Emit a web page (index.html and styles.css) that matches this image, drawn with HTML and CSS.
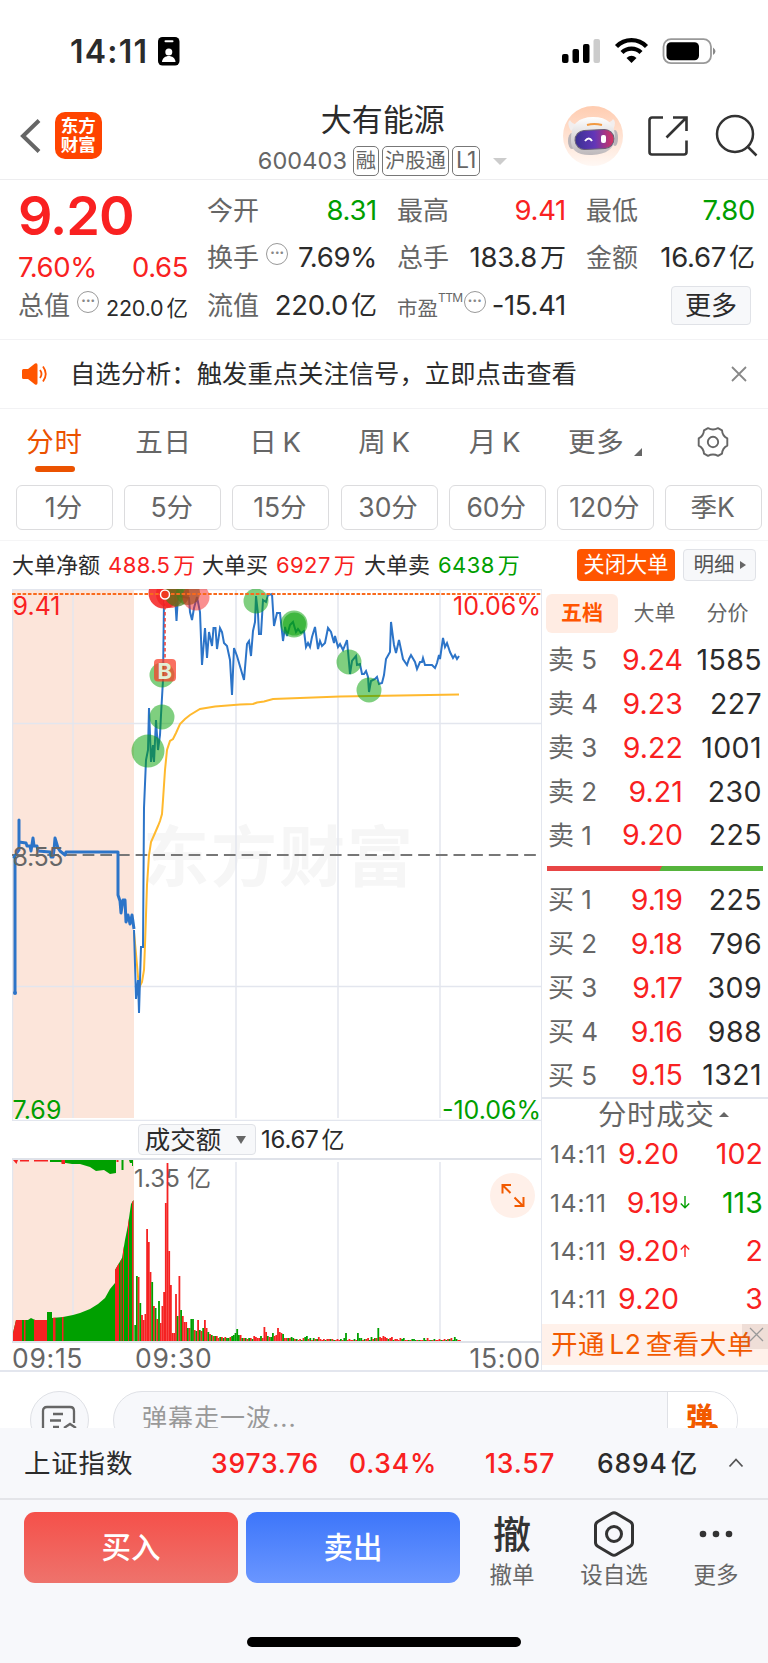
FILE: index.html
```html
<!DOCTYPE html>
<html lang="zh-CN">
<head>
    <meta charset="UTF-8">
    <title>大有能源 600403</title>
    <link rel="stylesheet" href="styles.css">
</head>
<body>
    <div class="statusbar">
        <span class="clock">14:11</span>
        <svg class="badge" width="22" height="29" viewBox="0 0 22 29"><rect width="21.5" height="28.5" rx="4.5"/><rect x="6.5" y="3.2" width="9" height="2" rx="1" fill="#fff"/><circle cx="10.8" cy="15" r="3.5" fill="#fff"/><path d="M4 25c.5-8 13-8 13.500 0z" fill="#fff"/></svg>
        <svg class="signals" width="156" height="28" viewBox="0 0 156 28">
            <rect x="0" y="16" width="6.500" height="9" rx="2"/><rect x="10.500" y="11" width="6.500" height="14" rx="2"/><rect x="21" y="6" width="6.500" height="19" rx="2"/><rect x="31.500" y="1" width="6.500" height="24" rx="2" fill="#ccc"/>
            <g fill="none" stroke="#000" stroke-width="4.300"><path d="M54.500 8.500a21 21 0 0 1 30 0"/><path d="M60 14.500a13.500 13.500 0 0 1 19 0"/></g>
            <path d="M64.500 20q5-4.500 10 0l-5 5z"/>
            <rect x="101.500" y="1.200" width="47.500" height="24" rx="7.500" fill="none" stroke="#999" stroke-width="1.800"/><rect x="104.500" y="4.200" width="32.500" height="18" rx="4.500"/><path d="M151 9.500q5 3.800 0 7.600z" fill="#888"/>
        </svg>
    </div>

    <div class="header">
        <svg class="back" width="22" height="36" viewBox="0 0 22 36"><path d="M19 2.500L3 18l16 15.500" fill="none" stroke="#666" stroke-width="4"/></svg>
        <div class="logo">东方<br>财富</div>
        <div class="stock">
            <div class="name">大有能源</div>
            <div class="code"><span>600403</span><i>融</i><i>沪股通</i><i>L1</i><b></b></div>
        </div>
        <svg class="robot" width="60" height="60" viewBox="0 0 60 60">
            <defs>
                <linearGradient id="halo" x2="0" y2="1"><stop offset="0" stop-color="#ffccb0"/><stop offset="1" stop-color="#fff8f4"/></linearGradient>
                <linearGradient id="visor"><stop offset="0" stop-color="#3a3192"/><stop offset=".5" stop-color="#6236b8"/><stop offset="1" stop-color="#d9345c"/></linearGradient>
                <linearGradient id="shell" x2="0" y2="1"><stop offset="0" stop-color="#fff"/><stop offset="1" stop-color="#bdb8bb"/></linearGradient>
            </defs>
            <circle cx="30" cy="30" r="30" fill="url(#halo)"/>
            <path d="M8 25Q3 17 7 14q2 5 9 4zM50 24q4-8 0-11-2 4-9 4z" fill="#f2eeee"/>
            <ellipse cx="9" cy="35" rx="4" ry="8" fill="#b9b4b8"/><ellipse cx="52" cy="32" rx="3" ry="8" fill="#b9b4b8"/>
            <path d="M8 33Q8 11 30 11t22 21q-1 16-23 17T8 33z" fill="url(#shell)"/>
            <rect x="12" y="24" width="39" height="19" rx="9.500" fill="url(#visor)" stroke="#6a6078" transform="rotate(-3 31 33)"/>
            <path d="M24 19q7-2 15 0" stroke="#f29a42" stroke-width="2" fill="none"/>
            <path d="M22 35q4-5 7 0" fill="none" stroke="#fff" stroke-width="2"/><rect x="38" y="29" width="5" height="8" rx="2" fill="#fff"/>
        </svg>
        <svg class="share" width="42" height="42" viewBox="0 0 42 42" fill="none" stroke="#333" stroke-width="2.600"><path d="M16 2.500H5a2.500 2.500 0 0 0-2.500 2.500v32A2.500 2.500 0 0 0 5 39.500h32a2.500 2.500 0 0 0 2.500-2.500V25.500"/><path d="M26 2.500h13.500V16M38.500 3.500L19.500 22.500"/></svg>
        <svg class="search" width="43" height="43" viewBox="0 0 43 43" fill="none" stroke="#333" stroke-width="2.500"><circle cx="20" cy="20" r="18"/><path d="M32 32l9.500 9.500"/></svg>
    </div>

    <div class="quote">
        <div class="main">
            <div class="last">9.20</div>
            <div class="chg"><span>7.60%</span><span>0.65</span></div>
            <div class="cap"><label>总值</label><em>···</em><span>220.0<u>亿</u></span></div>
        </div>
        <div class="grid">
            <div><label>今开</label><span class="green">8.31</span></div>
            <div><label>最高</label><span class="red">9.41</span></div>
            <div><label>最低</label><span class="green">7.80</span></div>
            <div><label>换手</label><em>···</em><span>7.69%</span></div>
            <div><label>总手</label><span>183.8<u>万</u></span></div>
            <div><label>金额</label><span>16.67<u>亿</u></span></div>
            <div><label>流值</label><span>220.0<u>亿</u></span></div>
            <div><label class="pe">市盈<sup>TTM</sup></label><em>···</em><span>-15.41</span></div>
            <div><button>更多</button></div>
        </div>
    </div>

    <div class="notice">
        <svg width="26" height="22" viewBox="0 0 26 22"><path d="M0 7.500Q0 6 1.500 6H6l7-5.500q2.500-1 2.500 1.500v18q0 2.500-2.500 1.500L6 16H1.500Q0 16 0 14.500z" fill="#ff5500"/><path d="M18 7q3 4 0 8M21 3.500q5.500 7.500 0 15" fill="none" stroke="#ff5500" stroke-width="1.800"/></svg>
        <span>自选分析：触发重点关注信号，立即点击查看</span>
        <svg width="16" height="16" viewBox="0 0 16 16"><path d="M1 1l14 14M15 1L1 15" stroke="#888" stroke-width="1.800"/></svg>
    </div>

    <div class="tabs">
        <span class="on">分时</span><span>五日</span><span>日 K</span><span>周 K</span><span>月 K</span><span class="more">更多</span>
        <span><svg width="32" height="32" viewBox="0 0 32 32" fill="none" stroke="#666" stroke-width="1.900"><path d="M11 2.200q5 2.600 10 0l4 2.200q.4 5.500 5.300 8v7.200q-4.900 2.500-5.300 8l-4 2.200q-5-2.600-10 0l-4-2.200q-.4-5.500-5.300-8v-7.200q4.900-2.500 5.300-8z" stroke-linejoin="round"/><circle cx="16" cy="16" r="5.200"/></svg></span>
    </div>
    <div class="chips">
        <span>1分</span><span>5分</span><span>15分</span><span>30分</span><span>60分</span><span>120分</span><span>季K</span>
    </div>

    <div class="bigorder">
        <span>大单净额</span><b class="red">488.5<u>万</u></b>
        <span>大单买</span><b class="red">6927<u>万</u></b>
        <span>大单卖</span><b class="green">6438<u>万</u></b>
        <button class="close">关闭大单</button><button class="detail">明细<i></i></button>
    </div>

    <div class="board">
        <div class="charts">
            <svg class="price" width="530" height="532" viewBox="12 589 530 532">
                <rect x="12" y="589" width="122" height="529" fill="#fce5da"/>
                <g class="mark"><text x="143" y="881" textLength="270">东方财富</text></g>
                <g stroke="#e3e6ee" stroke-width="1.500">
                    <path d="M12 589.500H541M12 723.500H541M12 986.500H541M12 1120.500H541"/>
                    <path d="M12.500 589V1120M73 589V1118M236 589V1118M338 589V1118M440 589V1118"/>
                </g>
                <path d="M12 855H541" stroke="#777" stroke-width="2" stroke-dasharray="11.700 5.960"/>
                <polyline class="avg" points="134,932 137,965 139,988 142,982 144,970 145,945 147,885 149,855 151,842 155,833 158,826 160,821 162,814 163,800 165,770 167,750 170,741 173,739 176,733 180,724 185,719 190,715 200,709 215,706.500 240,704.500 253,704 257,702.500 264,701.500 273,699 300,698 340,696.500 400,695.500 459,694.500"/>
                <polyline class="line pre" points="15,993 15,858 14,857 19,850 19,820 19,842 26,843 27,846 30,846 31,851 33,838 34,846 37,846 38,851 50,852 51,857 53,857 54,850 55,838 58,848 60,851 65,855 66,852 118,852 118,895 120,901 121,913 123,900 125,900 126,922 128,915 130,924 132,915 134,929"/>
                <polyline class="line" points="134,930 136,999 138,980 139,1013 141,947 143,947 144,808 146,760 148,750 149,708 151,762 153,745 154,762 156,720 158,750 160,735 161,715 163,680 164,600 165,594 175,595 176.500,621 178,596 189,598 190,612 192,620 194,608 197,597 200,612 202,665 205,628 207,658 209,632 212,646 213.500,628 215.500,628 217,649 220,628 222,632 224,643 227,646 230,660 232,695 234,648 237,656 244,680 247,644 249,641 251,656 253,631 255,622 256,596 258,614 259,634 261,634 263,600 266,602 268,595 272,594 274,626 277,613 280,613 283,641 285,627 287,636 290,625 293,622 296,632 298,629 301,633 304,631 306,647 308,643 310,647 312,637 315,627 318,649 320,641 322,646 325,643 328,628 331,632 334,643 335,636 338,647 340,644 343,650 347,640 350,674 352,661 356,656 357,665 360,664 362,674 364,674 366,671 368,677 369,692 371,681 375,679 377,677 379,684 382,683 384,675 386,659 390,652 391,622 394,645 396,653 399,640 403,659 407,665 409,659 411,655 415,662 417,669 420,662 422,662 423,658 425,665 432,665 435,668 437,663 439,655 440,659 443,638 445,647 447,643 450,652 453,658 455,655 457,659 459,656"/>
                <circle cx="15" cy="993" r="2" fill="#2c74c8"/>
                <g fill="#00a000" fill-opacity=".5">
                    <circle cx="148" cy="751" r="16.500"/><circle cx="162" cy="717" r="12.500"/><circle cx="162" cy="675" r="12.500"/><circle cx="256" cy="601" r="12.500"/>
                    <circle cx="294" cy="624" r="13.500"/><circle cx="294.500" cy="624" r="11.500"/><circle cx="349" cy="662" r="12.500"/><circle cx="369" cy="690" r="12.500"/>
                </g>
                <circle cx="164" cy="593" r="15.500" fill="#f52020" fill-opacity=".85"/><circle cx="170" cy="594" r="14" fill="#f52020" fill-opacity=".7"/>
                <circle cx="177" cy="594" r="12.500" fill="#4a7a1a" fill-opacity=".7"/><circle cx="188" cy="593" r="12" fill="#4a7a1a" fill-opacity=".65"/>
                <circle cx="196" cy="597" r="13.500" fill="#f52020" fill-opacity=".5"/>
                <path d="M12 594H541" stroke="#f96a1c" stroke-width="1.800" stroke-dasharray="3.600 1.700"/>
                <path d="M165 600V659" stroke="#f03a30" stroke-width="1.500" stroke-dasharray="3.500 2.500"/>
                <circle cx="165" cy="594.500" r="4.500" fill="#f03a20" stroke="#fff" stroke-width="1.500"/>
                <rect x="154" y="659" width="22" height="22.500" rx="4" fill="#f8402c" fill-opacity=".75"/>
                <text class="b" x="164.800" y="678.500">B</text>
                <g class="axis">
                    <text x="12.500" y="614.500" fill="#f92121" textLength="48">9.41</text><text x="541" y="614.500" fill="#f92121" text-anchor="end" textLength="88">10.06%</text>
                    <text x="12.500" y="866" fill="#666" textLength="51">8.55</text>
                    <text x="12.500" y="1119" fill="#009e00" textLength="49">7.69</text><text x="541" y="1119" fill="#009e00" text-anchor="end" textLength="99">-10.06%</text>
                </g>
            </svg>
            <div class="indicator"><button>成交额<i></i></button><span>16.67<u>亿</u></span></div>
            <svg class="volume" width="530" height="185" viewBox="12 1158 530 185">
                <rect x="12" y="1160" width="122" height="181" fill="#fce5da"/>
                <path d="M73 1162V1340M236 1162V1340M338 1162V1340M440 1162V1340M12.500 1158V1342" stroke="#e3e6ee" stroke-width="1.500"/>
                <text x="134" y="1186.500" class="peak" textLength="77">1.35 亿</text>
                <clipPath id="auction"><path d="M13 1341V1333L16 1320H28L31 1318 35 1320H47V1312H52V1318L63 1317 73 1315 80 1313 90 1309 98 1304 105 1298 110 1289 115 1283V1270L122 1258 125 1240 128 1225 131 1204 133.500 1200V1341z"/></clipPath>
                <g clip-path="url(#auction)">
                    <rect x="12" y="1190" width="122" height="151" fill="#00a000"/>
                    <path d="M13 1190h9v151h-9zM24 1190h1.500v151h-1.500zM34 1190h13v151h-13zM53 1190h2.500v151h-2.500zM62 1190h1.500v151h-1.500zM115 1190h4v151h-4zM120.500 1190h1v151h-1zM123 1190h1v151h-1zM128 1190h1v151h-1zM132 1190h2v151h-2z" fill="#f52222"/>
                </g>
                <path d="M50 1160V1162H60L72 1164 80 1164 90 1167 96 1171 104 1170 110 1174 116 1173V1160zM121.500 1160h2v10h-2zM129 1160h4v6h-1v-3h-2z" fill="#00a000"/>
                <path d="M13 1160h5l-1.500 4zM61.500 1160h3.500v4h-3.500zM20 1160h9v1.500h-9zM34 1160h14v1.500h-14zM116.500 1160h2v2h-2z" fill="#f52222"/>
                <g id="bars"></g>
                <path d="M12 1159H541M12 1342H541" stroke="#dfe2e9" stroke-width="2"/>
                <circle cx="512.500" cy="1195.500" r="22.500" fill="#fff0e9"/>
                <path d="M502.500 1193.500v-8.500h8.500M502.500 1185l8 8M514.500 1197.500l8 8M523.500 1197v9h-9" fill="none" stroke="#f25a00" stroke-width="2"/>
            </svg>
            <div class="times"><span>09:15</span><span>09:30</span><span>15:00</span></div>
        </div>

        <div class="depth">
            <div class="dtabs"><span class="on">五档</span><span>大单</span><span>分价</span></div>
            <div class="row"><label>卖 5</label><b>9.24</b><span>1585</span></div>
            <div class="row"><label>卖 4</label><b>9.23</b><span>227</span></div>
            <div class="row"><label>卖 3</label><b>9.22</b><span>1001</span></div>
            <div class="row"><label>卖 2</label><b>9.21</b><span>230</span></div>
            <div class="row"><label>卖 1</label><b>9.20</b><span>225</span></div>
            <div class="ratio"></div>
            <div class="row"><label>买 1</label><b>9.19</b><span>225</span></div>
            <div class="row"><label>买 2</label><b>9.18</b><span>796</span></div>
            <div class="row"><label>买 3</label><b>9.17</b><span>309</span></div>
            <div class="row"><label>买 4</label><b>9.16</b><span>988</span></div>
            <div class="row"><label>买 5</label><b>9.15</b><span>1321</span></div>
            <div class="ticks">
                <div class="thead">分时成交<i></i></div>
                <div class="tick"><label>14:11</label><b>9.20</b><i></i><span class="red">102</span></div>
                <div class="tick"><label>14:11</label><b>9.19</b><i class="green"><svg width="10" height="13" viewBox="0 0 10 13"><path d="M5 0v11.500M.8 7.500L5 11.700l4.200-4.200"/></svg></i><span class="green">113</span></div>
                <div class="tick"><label>14:11</label><b>9.20</b><i class="red"><svg width="10" height="13" viewBox="0 0 10 13"><path d="M5 13V1.500M.8 5.500L5 1.300l4.200 4.200"/></svg></i><span class="red">2</span></div>
                <div class="tick"><label>14:11</label><b>9.20</b><i></i><span class="red">3</span></div>
            </div>
            <div class="l2">开通 L2 查看大单<div class="x"><svg width="15" height="15" viewBox="0 0 15 15"><path d="M1 1l13 13M14 1L1 14" stroke="#999" stroke-width="1.300"/></svg></div></div>
        </div>
    </div>

    <div class="danmu">
        <div class="round"><svg width="36" height="36" viewBox="0 0 36 36" fill="none" stroke="#666" stroke-width="2.300"><path d="M2 34V6q0-4 4-4h23q4 0 4 4v12M12 9h10M9 15.500h11M12 22h6M23 23l6-4 6 4"/></svg></div>
        <div class="input"><span>弹幕走一波...</span><b>弹<i></i></b></div>
    </div>

    <div class="index">
        <span class="iname">上证指数</span><span class="red">3973.76</span><span class="red">0.34%</span><span class="red">13.57</span><span>6894<u>亿</u></span>
        <svg width="16" height="10" viewBox="0 0 16 10"><path d="M1.500 8.500L8 1.500l6.500 7" fill="none" stroke="#555" stroke-width="1.800"/></svg>
    </div>

    <div class="actions">
        <button class="buy">买入</button><button class="sell">卖出</button>
        <div class="act a1"><div class="ico">撤</div><span>撤单</span></div>
        <div class="act a2"><div class="ico"><svg width="42" height="46" viewBox="0 0 42 46" fill="none" stroke="#333" stroke-width="3"><path d="M18.500 2.500q2.500-1.500 5 0l13.500 8q2.500 1.500 2.500 4v17q0 2.500-2.500 4l-13.500 8q-2.500 1.500-5 0l-13.500-8q-2.500-1.500-2.500-4v-17q0-2.500 2.500-4z"/><circle cx="21" cy="23" r="7.500"/></svg></div><span>设自选</span></div>
        <div class="act a3"><div class="ico"><svg width="34" height="8" viewBox="0 0 34 8" fill="#333"><circle cx="4" cy="4" r="3.300"/><circle cx="17" cy="4" r="3.300"/><circle cx="30" cy="4" r="3.300"/></svg></div><span>更多</span></div>
    </div>
    <div class="home"></div>

    <script>
        // turnover per minute, in px; negative = falling minute
        const bars = [-16, -65, 64, -38, 26, 21, 27, 112, 99, 69, -59, 35, -33, 22, -40, 18, 35, 49, 138, 178, 90, 56, 8, 8, 47,
            -25, 65, -31, 25, 19, 19, -13, 13, -22, -22, 11, -10, 21, -11, 10, -13, 21, 13, -9, 7, -6, 5, -5, 5, 3, -4, 4, -3, 4, -3, -3, 4,
            -5, -6, -8, -12, -6, 6, -3, 3, -3, 2, -3, 3, -2, 5, 4, 3, 3, -5, 3, 14, 9, -5, 4, -4, -8, 5, 6, 13, 9, 8, -7, 3,
            3, -3, 3, -4, -3, 2, -2, 1, 2, -1, 3, -4, -5, 2, -3, 1, -3, 2, -2, 4, 2, 1, 2, -1, 2, 2, -2, 2, -1, 1, 2, 1, -2, 1, -3, -8,
            1, 2, 1, 1, -2, 1, -8, -3, -3, 1, -2, 2, 3, -1, -4, 2, -3, 3, -13, 4, 3, 5, 4, 3, -2, 3, 4, -1, 2, 2, 1, 3, -2, -3, 1, 1, -1, 1,
            -2, -2, -1, 1, -1, 1, 1, -3, -1, 3, 1, -1, 1, -2, 1, 1, 2, -1, 1, 2, -1, 2, -2, 3, -1, -4, -2, 1, 1];
        document.getElementById("bars").innerHTML = bars.map((v, i) =>
            `<rect x="${(134.3 + i * 1.7).toFixed(1)}" y="${1341 - Math.abs(v)}" width="1.8" height="${Math.abs(v)}" fill="${v < 0 ? "#00a000" : "#f52222"}"/>`).join("");
    </script>
</body>
</html>
```
FILE: styles.css
```css
* { box-sizing: border-box; }
body { margin: 0; width: 768px; height: 1663px; overflow: hidden; background: #fff; color: #2b2b2b; font-family: Inter, "Noto Sans CJK SC", sans-serif; font-size: 26px; line-height: 1; }
button { font: inherit; color: inherit; padding: 0; border: 1.500px solid #e0e2e7; background: #f7f8fa; border-radius: 4px; }
i, em { font-style: normal; }
b { font-weight: 400; }
u { text-decoration: none; margin-left: 3px; letter-spacing: 0; }
svg { display: block; flex: none; }
.red { color: #f92121; }
.green { color: #009e00; }

.statusbar { display: flex; height: 100px; padding: 38px 50px 0 70px; align-items: flex-start; }
.clock { font-size: 32px; font-weight: 600; line-height: 28px; width: 88px; letter-spacing: 1.200px; }
.badge { margin-top: -1px; }
.signals { margin: 0 0 0 auto; }

.header { display: flex; align-items: flex-start; height: 80px; padding: 0 10px 0 20px; border-bottom: 1.500px solid #ededef; }
.back { margin-top: 18px; }
.logo { width: 47px; height: 47px; margin: 12px 0 0 13px; padding-top: 4px; border-radius: 10px; background: #ff4400; color: #fff; font-size: 17.500px; font-weight: 700; line-height: 19px; text-align: center; }
.stock { width: 463px; padding-left: 157px; }
.name { height: 40px; padding-left: 62px; font-size: 31px; line-height: 39px; }
.code { display: flex; align-items: center; height: 30px; margin-top: 6px; color: #666; font-size: 23.500px; }
.code span { width: 95px; margin-left: -1px; letter-spacing: .1px; }
.code i { height: 30px; line-height: 27px; border: 1.500px solid #777; border-radius: 5px; font-size: 20.300px; padding: 0 2px; margin-right: 3px; white-space: nowrap; }
.code i:nth-of-type(3) { font-size: 23px; padding: 0 3px; letter-spacing: -.8px; }
.code b { border: 7px solid transparent; border-top-color: #ccc; border-bottom: 0; margin-left: 10px; }
.robot { margin-top: 6px; }
.share { margin: 15px 0 0 24px; }
.search { margin: 14px 0 0 26px; }

.quote { display: flex; height: 160px; padding: 0 13px 0 18px; border-bottom: 1.500px solid #f2f2f4; }
.main { width: 170px; margin-right: 19px; }
.last { height: 70px; line-height: 72px; font-size: 54px; font-weight: 600; color: #f92121; letter-spacing: -1px; }
.chg { display: flex; justify-content: space-between; height: 32px; line-height: 34px; color: #f92121; font-size: 27.500px; letter-spacing: -.4px; }
.cap { display: flex; align-items: center; height: 48px; }
.cap span { margin-left: auto; padding-top: 6px; font-size: 21.500px; letter-spacing: -.2px; white-space: nowrap; }
.quote label { color: #666; white-space: nowrap; }
.quote em { width: 22px; height: 22px; margin: -8px 0 0 7px; border: 1.800px solid #999; border-radius: 50%; color: #888; font-size: 15px; line-height: 18px; text-align: center; letter-spacing: -.3px; font-weight: 700; flex: none; }
.grid { display: grid; grid-template-columns: 170px 169px 169px; column-gap: 20px; grid-template-rows: 47px 48px 47px; padding-top: 7px; }
.grid > div { display: flex; align-items: center; }
.grid span { margin-left: auto; font-size: 27.500px; letter-spacing: -.3px; white-space: nowrap; }
.grid u { font-size: 26px; }
.grid label.pe { font-size: 20.500px; padding-top: 6px; }
.grid em { margin-left: 7px; }
.grid .pe + em { margin-left: 1px; margin-right: -3px; }
sup { font-size: 12px; vertical-align: 14px; line-height: 0; letter-spacing: -.6px; }
.grid button { width: 80px; height: 39px; margin-left: auto; margin-right: 4px; }

.notice { display: flex; align-items: center; height: 69px; padding: 0 21px 0 22px; border-bottom: 1.500px solid #f2f2f4; }
.notice span { flex: 1; margin-left: 22px; font-size: 25.350px; }

.tabs { display: grid; grid-template-columns: 109px 109px 115px 103px 118px 95px 118px; height: 75px; color: #666; font-size: 27.500px; }
.tabs span { display: flex; flex-direction: column; align-items: center; height: 64px; line-height: 67px; letter-spacing: .8px; word-spacing: -3.500px; }
.tabs .on { color: #eb5200; }
.tabs .on::after { content: ""; width: 40px; height: 6px; border-radius: 3px; background: #eb5200; margin-top: -10px; }
.tabs span svg { margin: 17px 0 0 9px; }
.tabs .more { flex-direction: row; padding: 2px 0 0 14px; }
.more::after { content: ""; border: 4px solid #666; border-top-color: transparent; border-left-color: transparent; margin: 19px 0 0 9px; }

.chips { display: grid; grid-template-columns: repeat(7, 97px); column-gap: 11.200px; height: 57px; padding: 1px 0 12px 16px; border-bottom: 1.500px solid #f5f5f6; }
.chips span { border: 1.500px solid #dcdcde; border-radius: 6px; color: #666; font-size: 26.500px; text-align: center; line-height: 43px; padding-right: 2px; }

.bigorder { display: flex; align-items: center; height: 48px; padding: 0 12px; font-size: 22px; white-space: nowrap; }
.bigorder b { margin: 0 8px; width: 86px; letter-spacing: .4px; }
.bigorder b + span + b { width: 80px; }
.bigorder button { height: 32px; }
.bigorder .close { width: 98px; margin-left: auto; background: #ff5500; border: 0; color: #fff; font-size: 21.200px; }
.bigorder .detail { width: 73px; margin-left: 8px; color: #555; font-size: 20.500px; display: flex; align-items: center; justify-content: center; }
.detail i { border: 4.500px solid transparent; border-left: 6px solid #666; border-right: 0; margin-left: 5px; }

.board { display: flex; height: 783px; border-bottom: 2px solid #e3e6ee; }
.charts { width: 542px; padding-left: 12px; border-right: 1.500px solid #e3e6ee; }
.mark text { font-size: 66px; font-weight: 700; fill: #f6f6f6; }
.line { fill: none; stroke: #2c74c8; stroke-width: 2; }
.pre { stroke-width: 3; stroke-linejoin: round; }
.avg { fill: none; stroke: #ffb92e; stroke-width: 2; }
.b { font-size: 22px; font-weight: 700; fill: #e2f0d6; text-anchor: middle; }
.axis { font-size: 25px; }
.indicator { display: flex; align-items: center; height: 37px; padding-left: 126px; font-size: 24px; letter-spacing: -.2px; }
.indicator button { display: flex; align-items: center; justify-content: center; width: 118px; height: 31px; margin-right: 5px; font-size: 25.500px; }
.indicator i { border: 5px solid transparent; border-top: 8px solid #666; border-bottom: 0; margin-left: 15px; margin-right: 3px; }
.indicator u { font-size: 23px; }
.peak { font-size: 24px; fill: #666; }
.times { display: flex; height: 29px; line-height: 30px; font-size: 26.500px; color: #666; letter-spacing: .7px; }
.times span:first-child { width: 123px; }
.times span:last-child { margin-left: auto; }

.depth { width: 226px; }
.dtabs { display: flex; align-items: center; height: 49px; padding-left: 4px; font-size: 21px; color: #666; }
.dtabs span { width: 73px; height: 39px; line-height: 38px; text-align: center; }
.dtabs .on { width: 72px; border-radius: 6px; background: #ffece3; color: #ff5500; font-weight: 700; }
.row { display: flex; align-items: center; height: 43.800px; padding: 1px 6px 0 6px; font-size: 28.500px; letter-spacing: .4px; }
.row label { width: 60px; font-size: 26px; color: #666; white-space: nowrap; letter-spacing: 0; }
.row b { width: 75px; text-align: right; color: #f92121; letter-spacing: .1px; }
.row span { margin-left: auto; }
.ratio { height: 5px; margin: 9px 5px 7px 5px; background: linear-gradient(120deg, #e84545 52.500%, #55b43c 52.700%); }
.ticks { margin-top: .500px; border-top: 2px solid #e3e6ee; height: 227px; }
.thead { display: flex; align-items: center; height: 31px; padding-left: 56px; font-size: 28.500px; color: #666; letter-spacing: .6px; }
.thead i { border: 5.500px solid transparent; border-bottom-color: #666; border-top: 0; margin-left: 5px; }
.tick { display: flex; align-items: center; height: 48.200px; font-size: 28.500px; padding: 0 5px 0 8px; letter-spacing: .1px; }
.tick label { width: 60px; font-size: 24.500px; color: #666; letter-spacing: .8px; }
.tick b { width: 69px; text-align: right; color: #f92121; }
.tick i { width: 12px; padding-left: 1px; }
.tick svg { fill: none; stroke: currentColor; stroke-width: 1.400; }
.tick span { margin-left: auto; }
.l2 { position: relative; height: 41px; line-height: 40px; padding-left: 9px; background: #fff1ea; color: #f25a00; font-size: 26.500px; letter-spacing: .6px; word-spacing: -4px; white-space: nowrap; }
.x { position: absolute; right: 0; top: 0; width: 26px; height: 25px; padding: 3px 0 0 7px; background: rgba(120, 90, 80, .12); }

.danmu { display: flex; height: 56px; padding: 19px 30px 0; overflow: hidden; }
.round, .input { height: 58px; flex: none; border: 1.500px solid #dfe1e6; background: #f7f8fb; border-radius: 29px; }
.round { width: 59px; padding: 13px 0 0 10px; }
.input { display: flex; width: 625px; margin-left: 24px; padding-left: 28px; overflow: hidden; line-height: 52px; font-size: 25px; color: #999; letter-spacing: 1px; }
.input b { display: flex; width: 70px; margin-left: auto; padding-left: 18px; border-left: 1.500px solid #dfe1e6; background: #fff; color: #f25a00; font-size: 27px; font-weight: 900; letter-spacing: 0; }
.input b i { width: 9px; height: 9px; margin: 32px 0 0 -4px; border-radius: 50%; background: #f25a00; }

.index { display: flex; align-items: center; height: 72px; padding: 0 24px 0 24px; background: #f7f8fb; border-bottom: 2px solid #e4e5e9; font-size: 26.500px; font-weight: 500; letter-spacing: .8px; white-space: nowrap; }
.iname { width: 187px; font-size: 26.500px; font-weight: 400; }
.index .red:nth-child(2) { width: 138px; }
.index .red:nth-child(3) { width: 136px; }
.index .red:nth-child(4) { width: 112px; }
.index svg { margin-left: auto; }

.actions { display: flex; height: 137px; padding: 12px 0 0 24px; background: #f7f8fb; }
.actions button { width: 214px; height: 71px; margin-right: 8px; border: 0; border-radius: 11px; color: #fff; font-size: 29.500px; font-weight: 500; }
.buy { background: linear-gradient(#f5504a, #ee736c); }
.sell { background: linear-gradient(#3d76fa, #6a96ff); }
.act { width: 102px; text-align: center; font-size: 22.500px; color: #666; }
.a1 { margin-left: -7px; }
.ico { display: flex; align-items: center; justify-content: center; height: 44px; margin-bottom: 8px; color: #333; font-size: 38px; font-weight: 500; }
.home { height: 28px; background: #f7f8fb; }
.home::before { content: ""; display: block; width: 274px; height: 10px; margin-left: 247px; border-radius: 5px; background: #000; }
```
